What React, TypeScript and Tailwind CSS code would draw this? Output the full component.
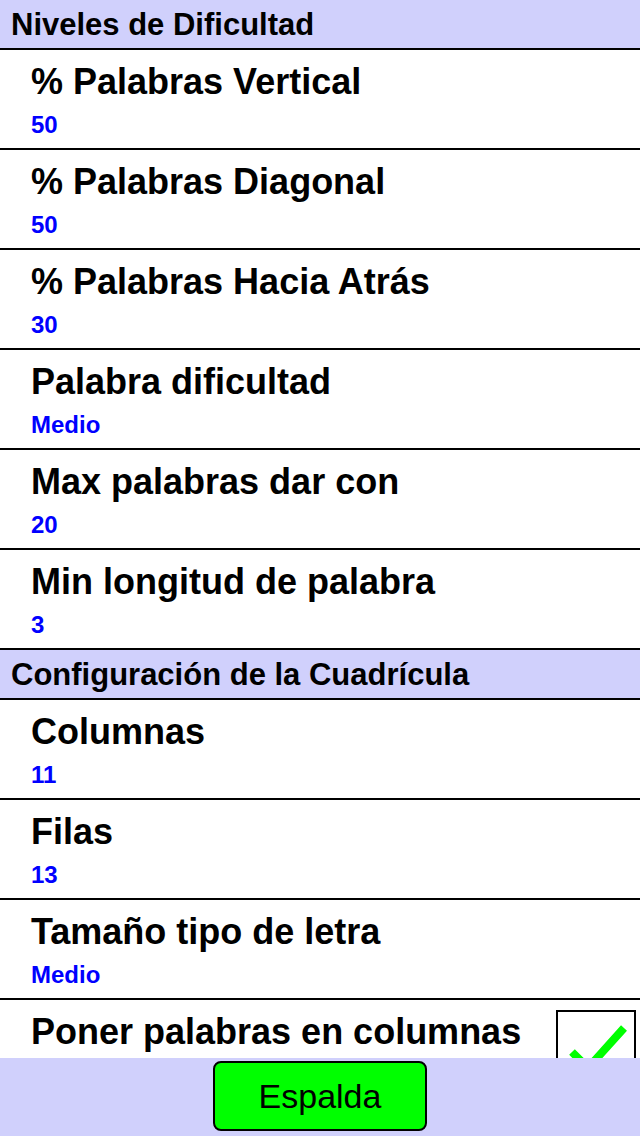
import React from "react";

type Item = { title: string; value?: string; check?: boolean };

const sections: { header: string; items: Item[] }[] = [
  {
    header: "Niveles de Dificultad",
    items: [
      { title: "% Palabras Vertical", value: "50" },
      { title: "% Palabras Diagonal", value: "50" },
      { title: "% Palabras Hacia Atrás", value: "30" },
      { title: "Palabra dificultad", value: "Medio" },
      { title: "Max palabras dar con", value: "20" },
      { title: "Min longitud de palabra", value: "3" },
    ],
  },
  {
    header: "Configuración de la Cuadrícula",
    items: [
      { title: "Columnas", value: "11" },
      { title: "Filas", value: "13" },
      { title: "Tamaño tipo de letra", value: "Medio" },
      { title: "Poner palabras en columnas", check: true },
    ],
  },
];

const CheckBox: React.FC = () => (
  <div className="absolute right-[4px] top-[10px] w-[80px] h-[80px] border-[2px] border-black bg-white">
    <svg width="76" height="76" viewBox="0 0 76 76">
      <path d="M14 40 L30 56 L66 16" fill="none" stroke="#00ff00" strokeWidth="8" />
    </svg>
  </div>
);

export default function App() {
  return (
    <div
      className="w-[640px] h-[1136px] flex flex-col bg-white overflow-hidden"
      style={{ fontFamily: '"Liberation Sans", Arial, sans-serif' }}
    >
      <div className="flex-1 overflow-hidden">
        {sections.map((s) => (
          <div key={s.header}>
            <div className="h-[50px] bg-[#d0d0fc] border-b-[2px] border-black pl-[11px] pt-[1px] text-[31px] leading-[48px] font-bold text-black whitespace-nowrap">
              {s.header}
            </div>
            {s.items.map((it) => (
              <div key={it.title} className="relative h-[100px] border-b-[2px] border-black pl-[31px] pt-[12px]">
                <div className="text-[36px] leading-[40px] font-bold text-black whitespace-nowrap">{it.title}</div>
                {it.value && (
                  <div className="mt-[9px] text-[24px] leading-[28px] font-bold text-[#0000ff]">{it.value}</div>
                )}
                {it.check && <CheckBox />}
              </div>
            ))}
          </div>
        ))}
      </div>
      <div className="h-[78px] bg-[#d0d0fc] flex justify-center pt-[3px]">
        <button className="w-[214px] h-[70px] bg-[#00ff00] border-[2px] border-black rounded-[8px] text-[34px] text-black">
          Espalda
        </button>
      </div>
    </div>
  );
}
